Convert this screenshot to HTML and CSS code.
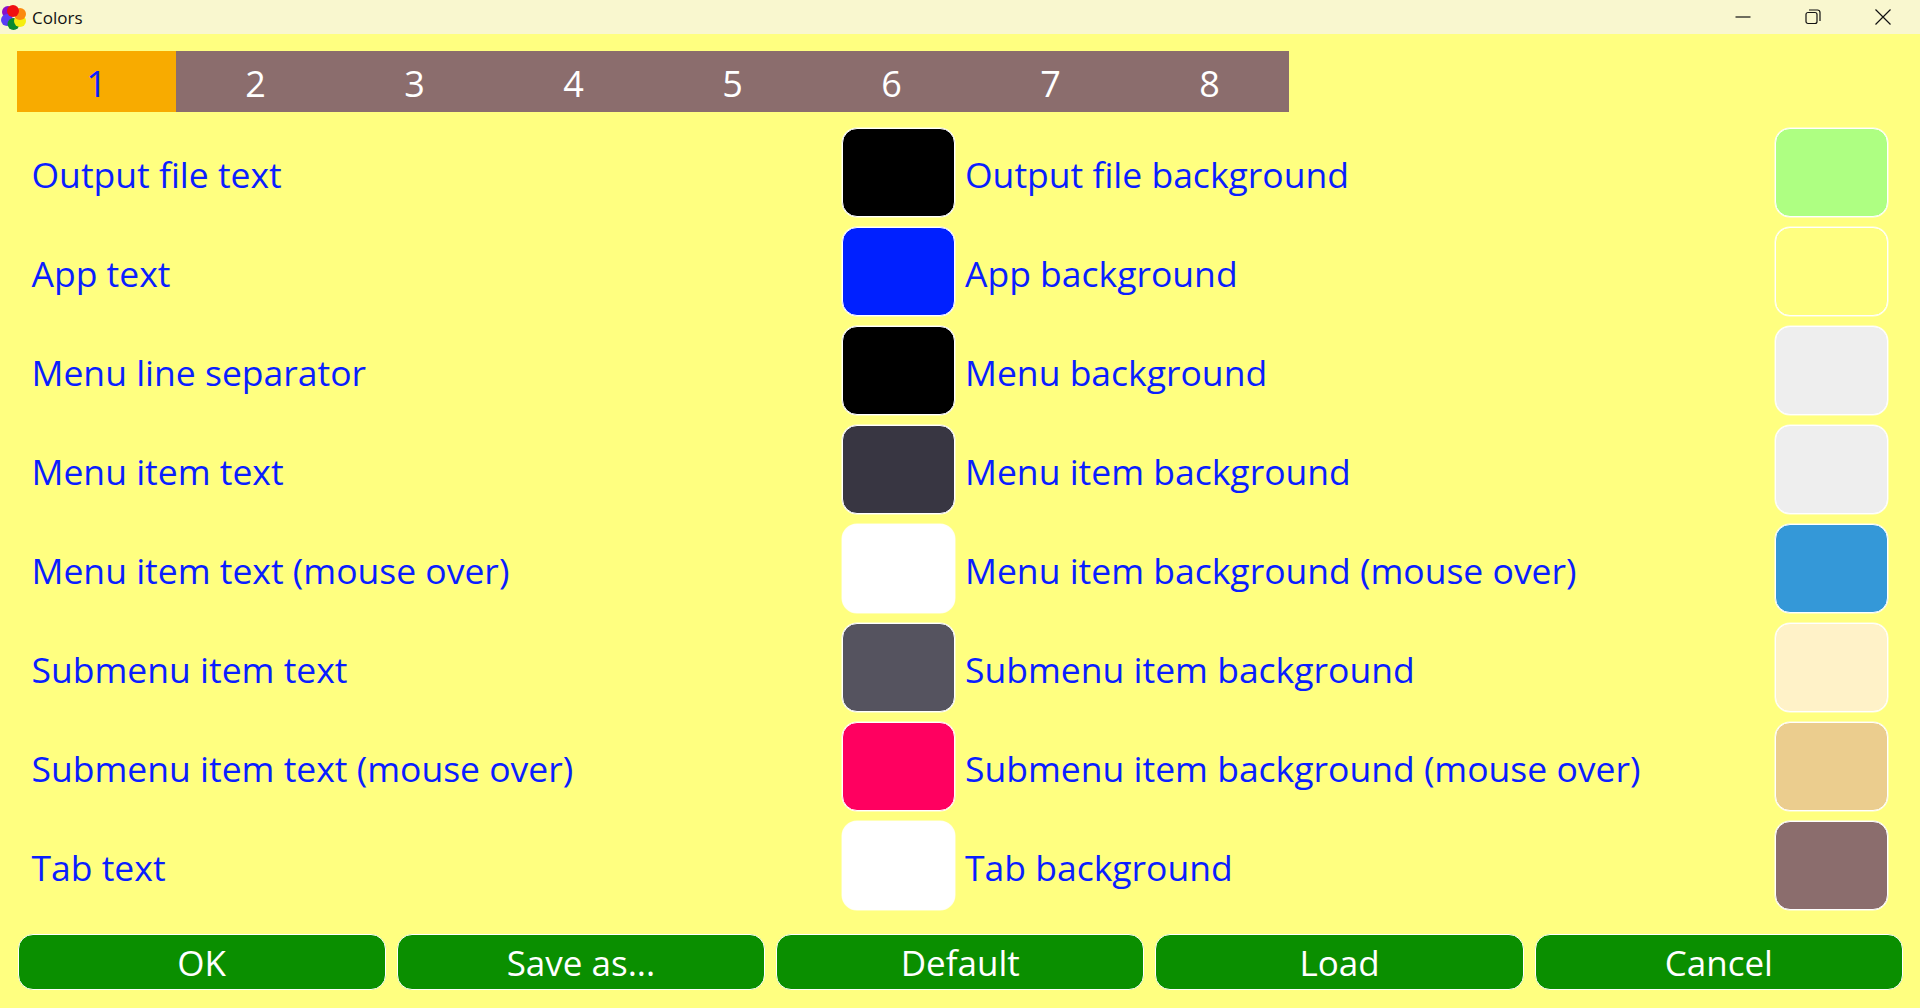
FILE: index.html
```html
<!DOCTYPE html>
<html lang="en">
<head>
<meta charset="utf-8">
<title>Colors</title>
<link rel="stylesheet" href="styles.css">
</head>
<body>
<header class="titlebar">
  <div class="title">
    <svg class="logo" viewBox="0 0 25 25" aria-hidden="true">
      <circle cx="7" cy="7" r="6" fill="#8a10c8"/>
      <circle cx="6" cy="15" r="6" fill="#5a3cf5"/>
      <circle cx="12.5" cy="19" r="6" fill="#0a8a30"/>
      <circle cx="19" cy="16" r="6" fill="#f5ee10"/>
      <circle cx="19" cy="9" r="6" fill="#fb8a10"/>
      <circle cx="12" cy="6" r="6" fill="#f01010"/>
    </svg>
    <span>Colors</span>
  </div>
  <div class="winbtns">
    <svg class="winicon" viewBox="0 0 16 16" aria-hidden="true"><path d="M0.5 8H15.5"/></svg>
    <svg class="winicon" viewBox="0 0 16 16" aria-hidden="true"><rect x="1" y="3.5" width="11" height="11" rx="2"/><path d="M4 1H12.5A2.5 2.5 0 0 1 15 3.5V12"/></svg>
    <svg class="winicon" viewBox="0 0 16 16" aria-hidden="true"><path d="M0.5 0.5L15.5 15.5M15.5 0.5L0.5 15.5"/></svg>
  </div>
</header>
<nav class="tabs">
  <div class="tab active">1</div>
  <div class="tab">2</div>
  <div class="tab">3</div>
  <div class="tab">4</div>
  <div class="tab">5</div>
  <div class="tab">6</div>
  <div class="tab">7</div>
  <div class="tab">8</div>
</nav>
<main class="grid">
  <div class="row"><span>Output file text</span><div class="swatch c-black"></div></div>
  <div class="row"><span>Output file background</span><div class="swatch c-green"></div></div>
  <div class="row"><span>App text</span><div class="swatch c-blue"></div></div>
  <div class="row"><span>App background</span><div class="swatch c-app"></div></div>
  <div class="row"><span>Menu line separator</span><div class="swatch c-black"></div></div>
  <div class="row"><span>Menu background</span><div class="swatch c-grey"></div></div>
  <div class="row"><span>Menu item text</span><div class="swatch c-dark"></div></div>
  <div class="row"><span>Menu item background</span><div class="swatch c-grey"></div></div>
  <div class="row"><span>Menu item text (mouse over)</span><div class="swatch c-white"></div></div>
  <div class="row"><span>Menu item background (mouse over)</span><div class="swatch c-sky"></div></div>
  <div class="row"><span>Submenu item text</span><div class="swatch c-slate"></div></div>
  <div class="row"><span>Submenu item background</span><div class="swatch c-cream"></div></div>
  <div class="row"><span>Submenu item text (mouse over)</span><div class="swatch c-pink"></div></div>
  <div class="row"><span>Submenu item background (mouse over)</span><div class="swatch c-tan"></div></div>
  <div class="row"><span>Tab text</span><div class="swatch c-white"></div></div>
  <div class="row"><span>Tab background</span><div class="swatch c-mauve"></div></div>
</main>
<footer class="actions">
  <button class="btn">OK</button>
  <button class="btn">Save as...</button>
  <button class="btn">Default</button>
  <button class="btn">Load</button>
  <button class="btn">Cancel</button>
</footer>
</body>
</html>
```

FILE: styles.css
```css
* { box-sizing: border-box; }
html, body { margin: 0; height: 100%; }
body {
  background: #ffff80;
  font-family: "Open Sans", "Noto Sans", sans-serif;
  display: flex;
  flex-direction: column;
  overflow: hidden;
}
.titlebar {
  height: 34px;
  flex: none;
  background: #f9f7cf;
  display: flex;
  justify-content: space-between;
  align-items: center;
}
.title {
  display: flex;
  align-items: center;
  gap: 6px;
  font-size: 17px;
  color: #111;
  padding-left: 1px;
}
.logo { width: 25px; height: 25px; display: block; }
.winbtns {
  display: flex;
  gap: 54px;
  padding-right: 29px;
}
.winicon {
  width: 16px;
  height: 16px;
  fill: none;
  stroke: #111;
  stroke-width: 1.2;
}
.tabs {
  display: flex;
  margin: 17px 0 0 17px;
  flex: none;
}
.tab {
  width: 159px;
  height: 61px;
  background: #8b6d6d;
  color: #fff;
  font-size: 36px;
  line-height: 66px;
  text-align: center;
}
.tab.active { background: #f8ab00; color: #0a1eff; }
.grid {
  display: grid;
  grid-template-columns: 923.5px 923px;
  grid-auto-rows: 99px;
  column-gap: 10px;
  margin: 16px 0 0 31.5px;
  flex: none;
}
.row {
  display: flex;
  justify-content: space-between;
  align-items: flex-start;
  color: #0a1eff;
  font-size: 35.5px;
}
.row span { line-height: 93px; }
.swatch {
  width: 113px;
  height: 89px;
  border: 1px solid #fff;
  border-radius: 15px;
  box-shadow: 0 0 0 0.5px rgba(255, 255, 255, 0.85);
}
.c-black { background: #000; }
.c-blue { background: #0020ff; }
.c-dark { background: #383642; }
.c-white { background: #fff; }
.c-slate { background: #55535f; }
.c-pink { background: #ff0060; }
.c-green { background: #aeff82; }
.c-app { background: #ffff80; }
.c-grey { background: #eee; }
.c-sky { background: #3498d8; }
.c-cream { background: #fff2c8; }
.c-tan { background: #ebcd8e; }
.c-mauve { background: #8b6d6d; }
.actions {
  display: flex;
  gap: 11px;
  margin: 14px 17px 0 17.5px;
  flex: none;
}
.btn {
  flex: 1;
  height: 56px;
  border: 1px solid #fff;
  border-radius: 15px;
  background: #0a8f00;
  color: #fff;
  font: inherit;
  font-size: 35px;
  line-height: 1;
  padding: 0;
}
```
